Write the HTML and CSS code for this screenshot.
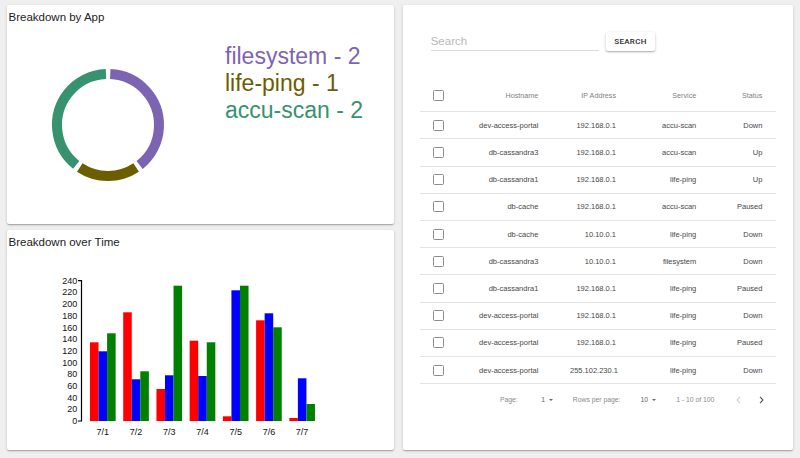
FILE: index.html
```html
<!DOCTYPE html>
<html lang="en">
<head>
<meta charset="utf-8">
<title>Dashboard</title>
<link rel="stylesheet" href="styles.css">
</head>
<body>
<div class="page">
  <section class="card card-app">
    <h2 class="card-title">Breakdown by App</h2>
    <div class="app-body">
      <svg class="donut" width="218" height="196" viewBox="0 0 218 196">
        <g transform="translate(101 101)">
          <circle r="51" class="seg seg-fs" stroke-dasharray="123.68 320.44" transform="rotate(-87.47)"/>
          <circle r="51" class="seg seg-lp" stroke-dasharray="59.59 320.44" transform="rotate(56.53)"/>
          <circle r="51" class="seg seg-as" stroke-dasharray="123.68 320.44" transform="rotate(128.53)"/>
        </g>
      </svg>
      <ul class="legend">
        <li class="lg-fs">filesystem - 2</li>
        <li class="lg-lp">life-ping - 1</li>
        <li class="lg-as">accu-scan - 2</li>
      </ul>
    </div>
  </section>

  <section class="card card-time">
    <h2 class="card-title">Breakdown over Time</h2>
    <svg class="bars" width="387" height="196" viewBox="0 0 387 196">
      <g class="series red">
        <rect x="83" y="93.3" width="8.55" height="78.7"/>
        <rect x="116.22" y="63.3" width="8.55" height="108.7"/>
        <rect x="149.44" y="140" width="8.55" height="32"/>
        <rect x="182.66" y="91.7" width="8.55" height="80.3"/>
        <rect x="215.88" y="167.3" width="8.55" height="4.7"/>
        <rect x="249.1" y="71.3" width="8.55" height="100.7"/>
        <rect x="282.32" y="169" width="8.55" height="3"/>
      </g>
      <g class="series blue">
        <rect x="91.55" y="102.3" width="8.55" height="69.7"/>
        <rect x="124.77" y="130.3" width="8.55" height="41.7"/>
        <rect x="157.99" y="126.3" width="8.55" height="45.7"/>
        <rect x="191.21" y="127" width="8.55" height="45"/>
        <rect x="224.43" y="41.3" width="8.55" height="130.7"/>
        <rect x="257.65" y="64.3" width="8.55" height="107.7"/>
        <rect x="290.87" y="129.3" width="8.55" height="42.7"/>
      </g>
      <g class="series green">
        <rect x="100.1" y="84.3" width="8.55" height="87.7"/>
        <rect x="133.32" y="122.3" width="8.55" height="49.7"/>
        <rect x="166.54" y="36.7" width="8.55" height="135.3"/>
        <rect x="199.76" y="93.3" width="8.55" height="78.7"/>
        <rect x="232.98" y="36.7" width="8.55" height="135.3"/>
        <rect x="266.2" y="78.3" width="8.55" height="93.7"/>
        <rect x="299.42" y="155" width="8.55" height="17"/>
      </g>
      <path class="axis" d="M71 31.7 H74.5 V172 H71"/>
      <g class="ylabels">
        <text x="70.3" y="172" dy="0.34em">0</text>
        <text x="70.3" y="160.31" dy="0.34em">20</text>
        <text x="70.3" y="148.62" dy="0.34em">40</text>
        <text x="70.3" y="136.92" dy="0.34em">60</text>
        <text x="70.3" y="125.23" dy="0.34em">80</text>
        <text x="70.3" y="113.54" dy="0.34em">100</text>
        <text x="70.3" y="101.85" dy="0.34em">120</text>
        <text x="70.3" y="90.16" dy="0.34em">140</text>
        <text x="70.3" y="78.46" dy="0.34em">160</text>
        <text x="70.3" y="66.77" dy="0.34em">180</text>
        <text x="70.3" y="55.08" dy="0.34em">200</text>
        <text x="70.3" y="43.39" dy="0.34em">220</text>
        <text x="70.3" y="31.7" dy="0.34em">240</text>
      </g>
      <g class="xlabels">
        <text x="95.8" y="186">7/1</text>
        <text x="129" y="186">7/2</text>
        <text x="162.2" y="186">7/3</text>
        <text x="195.5" y="186">7/4</text>
        <text x="228.7" y="186">7/5</text>
        <text x="261.9" y="186">7/6</text>
        <text x="295.1" y="186">7/7</text>
      </g>
    </svg>
  </section>

  <section class="card card-hosts">
    <div class="search-row">
      <input class="search-input" type="text" placeholder="Search">
      <button class="search-btn" type="button">SEARCH</button>
    </div>
    <table class="hosts">
      <colgroup>
        <col class="c-check"><col class="c-host"><col class="c-ip"><col class="c-svc"><col class="c-status">
      </colgroup>
      <thead>
        <tr><th class="check"><span class="cb"></span></th><th>Hostname</th><th>IP Address</th><th>Service</th><th class="last">Status</th></tr>
      </thead>
      <tbody>
        <tr><td class="check"><span class="cb"></span></td><td>dev-access-portal</td><td>192.168.0.1</td><td>accu-scan</td><td class="last">Down</td></tr>
        <tr><td class="check"><span class="cb"></span></td><td>db-cassandra3</td><td>192.168.0.1</td><td>accu-scan</td><td class="last">Up</td></tr>
        <tr><td class="check"><span class="cb"></span></td><td>db-cassandra1</td><td>192.168.0.1</td><td>life-ping</td><td class="last">Up</td></tr>
        <tr><td class="check"><span class="cb"></span></td><td>db-cache</td><td>192.168.0.1</td><td>accu-scan</td><td class="last">Paused</td></tr>
        <tr><td class="check"><span class="cb"></span></td><td>db-cache</td><td>10.10.0.1</td><td>life-ping</td><td class="last">Down</td></tr>
        <tr><td class="check"><span class="cb"></span></td><td>db-cassandra3</td><td>10.10.0.1</td><td>filesystem</td><td class="last">Down</td></tr>
        <tr><td class="check"><span class="cb"></span></td><td>db-cassandra1</td><td>192.168.0.1</td><td>life-ping</td><td class="last">Paused</td></tr>
        <tr><td class="check"><span class="cb"></span></td><td>dev-access-portal</td><td>192.168.0.1</td><td>life-ping</td><td class="last">Down</td></tr>
        <tr><td class="check"><span class="cb"></span></td><td>dev-access-portal</td><td>192.168.0.1</td><td>life-ping</td><td class="last">Paused</td></tr>
        <tr><td class="check"><span class="cb"></span></td><td>dev-access-portal</td><td>255.102.230.1</td><td>life-ping</td><td class="last">Down</td></tr>
      </tbody>
      <tfoot>
        <tr>
          <td colspan="5" class="pager-cell">
            <div class="pager">
              <span class="p-label">Page:</span>
              <span class="p-select">1</span><span class="caret"></span>
              <span class="p-label p-rows">Rows per page:</span>
              <span class="p-select">10</span><span class="caret"></span>
              <span class="p-range">1 - 10 of 100</span>
              <svg class="chev chev-prev" width="5" height="8" viewBox="0 0 5 8"><path d="M4 0.8 L1 4 L4 7.2"/></svg>
              <svg class="chev chev-next" width="5" height="8" viewBox="0 0 5 8"><path d="M1 0.8 L4 4 L1 7.2"/></svg>
            </div>
          </td>
        </tr>
      </tfoot>
    </table>
  </section>
</div>
</body>
</html>
```

FILE: styles.css
```css
html, body {
  margin: 0;
  padding: 0;
}

body {
  background: #efefef;
  font-family: "Liberation Sans", Arial, Helvetica, sans-serif;
  color: #222;
}

.page {
  width: 800px;
  height: 458px;
  box-sizing: border-box;
  padding: 5px 7px 8px;
  display: grid;
  grid-template-columns: 387px 390px;
  grid-template-rows: 219px 220px;
  column-gap: 9px;
  row-gap: 6px;
}

.card {
  background: #fff;
  border-radius: 2px;
  box-shadow: 0 1px 3px rgba(0, 0, 0, 0.18), 0 1px 1px rgba(0, 0, 0, 0.12), 0 2px 1px -1px rgba(0, 0, 0, 0.1);
  overflow: hidden;
}

.card-title {
  margin: 0;
  padding: 5px 0 0 1.5px;
  height: 19px;
  box-sizing: border-box;
  font-size: 11.5px;
  line-height: 14px;
  font-weight: normal;
  color: #222;
}

/* Breakdown by App */
.app-body {
  display: flex;
  align-items: flex-start;
}

.donut {
  display: block;
  flex: none;
}

.seg {
  fill: none;
  stroke-width: 10;
}

.seg-fs { stroke: #7d64b3; }
.seg-lp { stroke: #6b5d00; }
.seg-as { stroke: #36926f; }

.legend {
  list-style: none;
  margin: 0;
  padding: 18.8px 0 0 0;
  font-size: 23px;
  line-height: 27px;
}

.lg-fs { color: #7d64b3; }
.lg-lp { color: #6b5d00; }
.lg-as { color: #36926f; }

/* Breakdown over Time */
.bars {
  display: block;
}

.series.red rect { fill: #ff0000; }
.series.blue rect { fill: #0000ff; }
.series.green rect { fill: #008000; }

.axis {
  fill: none;
  stroke: #000;
  stroke-width: 1.2;
}

.bars text {
  font-family: "Liberation Sans", Arial, sans-serif;
  font-size: 9px;
  fill: #111;
}

.ylabels text { text-anchor: end; }
.xlabels text { text-anchor: middle; }

/* Hosts table card */
.card-hosts {
  grid-column: 2;
  grid-row: 1 / span 2;
  padding: 0 17px;
}

.search-row {
  display: flex;
  align-items: flex-end;
  padding: 26.7px 0 0 10.7px;
}

.search-input {
  width: 168.6px;
  height: 17px;
  box-sizing: border-box;
  margin: 0 0 0.2px 0;
  padding: 0 0 1px 0;
  border: 0;
  border-bottom: 1px solid #dcdcdc;
  outline: none;
  background: transparent;
  font-family: "Liberation Sans", Arial, sans-serif;
  font-size: 11.5px;
  line-height: 16px;
  color: #333;
}

.search-input::placeholder {
  color: #b8b8b8;
}

.search-btn {
  margin-left: 6.4px;
  width: 49.6px;
  height: 19px;
  padding: 0;
  border: 0;
  border-radius: 2px;
  background: #fff;
  box-shadow: 0 1px 3px rgba(0, 0, 0, 0.22), 0 1px 1px rgba(0, 0, 0, 0.14);
  font-family: Roboto, "Liberation Sans", Arial, sans-serif;
  font-size: 8px;
  font-weight: 500;
  letter-spacing: 0.3px;
  color: #2a2a2a;
}

.hosts {
  margin-top: 29.9px;
  width: 356px;
  table-layout: fixed;
  border-collapse: separate;
  border-spacing: 0;
}

.c-check { width: 40px; }
.c-host { width: 110px; }
.c-ip { width: 77.7px; }
.c-svc { width: 80.3px; }
.c-status { width: 48px; }

.hosts th,
.hosts td {
  padding: 0 31.7px 0 0;
  text-align: right;
  white-space: nowrap;
  border-bottom: 1px solid #e3e3e3;
}

.hosts th.last,
.hosts td.last {
  padding-right: 13.6px;
}

.hosts th.check,
.hosts td.check {
  padding: 0 0 0 13.3px;
  text-align: left;
}

.hosts thead tr { height: 31.7px; }
.hosts tbody tr { height: 27.2px; }

.hosts th {
  font-size: 7.2px;
  font-weight: normal;
  color: #808080;
}

.hosts td {
  font-size: 7.5px;
  color: #474747;
}

.cb {
  display: inline-block;
  width: 11px;
  height: 11px;
  box-sizing: border-box;
  border: 1px solid #8d8d8d;
  border-radius: 1.5px;
  vertical-align: middle;
}

.hosts tfoot tr { height: 31.7px; }

.hosts td.pager-cell {
  border-bottom: 0;
  padding: 0;
  text-align: left;
}

.pager {
  display: flex;
  align-items: center;
  padding-left: 80px;
  font-size: 6.8px;
  color: #8a8a8a;
}

.p-label { margin-right: 23.4px; }
.p-rows { margin-left: 19.7px; margin-right: 20px; }

.p-select { color: #666; }

.caret {
  margin-left: 4.2px;
  width: 0;
  height: 0;
  border-left: 2.2px solid transparent;
  border-right: 2.2px solid transparent;
  border-top: 2.5px solid #666;
}

.p-range {
  margin-left: 20px;
}

.chev {
  display: block;
}

.chev path {
  fill: none;
  stroke-width: 1.1;
}

.chev-prev {
  margin-left: 21.7px;
}

.chev-prev path { stroke: #cfcfcf; }

.chev-next {
  margin-left: 17.6px;
}

.chev-next path { stroke: #555; }
```
